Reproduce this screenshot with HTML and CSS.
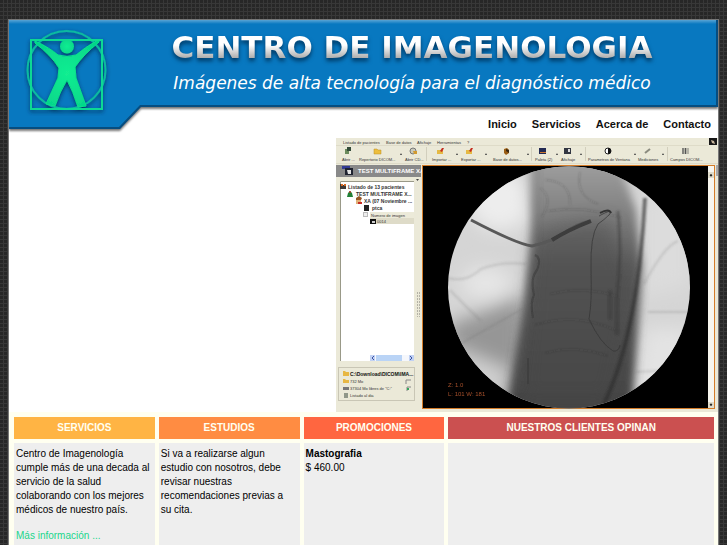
FILE: index.html
```html
<!DOCTYPE html>
<html lang="es">
<head>
<meta charset="utf-8">
<title>Centro de Imagenología</title>
<link rel="stylesheet" href="styles.css">
</head>
<body>
<div class="page">
  <header class="banner">
    <div class="banner-shape"><div class="banner-edge"></div><div class="banner-face"></div></div>
    <svg class="logo" viewBox="24 26 88 90" width="88" height="90" role="img" aria-label="Logotipo">
      <defs>
        <radialGradient id="body-green" cx="50%" cy="50%" r="60%"><stop offset="0" stop-color="#12ee91"/><stop offset="1" stop-color="#04d58a"/></radialGradient>
        <filter id="logo-shadow" x="-20%" y="-20%" width="150%" height="150%"><feDropShadow dx="0" dy="2" stdDeviation="2" flood-color="#002c50" flood-opacity=".85"/></filter>
      </defs>
      <g filter="url(#logo-shadow)">
        <circle cx="66.500" cy="70" r="39" fill="none" stroke="#09b9a0" stroke-width="2"/>
        <rect x="31" y="40" width="71" height="69" fill="none" stroke="#10d994" stroke-width="2"/>
        <circle cx="67" cy="46.500" r="7" fill="url(#body-green)"/>
        <path d="M35 41Q50 48 58 55Q67 58 76 55Q84 48 98 40L99 42Q83 55 75 67L76 78L86 106L78 107Q73 91 67 80Q60 91 55 106L46 104L58 78L59 68Q51 55 35 43Z" fill="url(#body-green)" stroke="#08e08a"/>
      </g>
    </svg>
    <div class="banner-main">
      <div class="banner-text">
        <h1>CENTRO DE IMAGENOLOGIA</h1>
        <p>Imágenes de alta tecnología para el diagnóstico médico</p>
      </div>
      <nav class="menu">
        <a href="#inicio">Inicio</a>
        <a href="#servicios">Servicios</a>
        <a href="#acerca">Acerca de</a>
        <a href="#contacto">Contacto</a>
      </nav>
    </div>
  </header>

  <div class="hero">
    <svg class="viewer" viewBox="336 138 382 274" width="382" height="274" role="img" aria-label="Visor de imágenes médicas">
      <defs>
        <clipPath id="scope"><circle cx="569" cy="287.500" r="121"/></clipPath>
        <filter id="b1" x="-50%" y="-50%" width="200%" height="200%"><feGaussianBlur stdDeviation="1"/></filter>
        <filter id="b0" x="-50%" y="-50%" width="200%" height="200%"><feGaussianBlur stdDeviation=".5"/></filter>
        <filter id="b3" x="-50%" y="-50%" width="200%" height="200%"><feGaussianBlur stdDeviation="4"/></filter>
        <filter id="b9" x="-50%" y="-50%" width="200%" height="200%"><feGaussianBlur stdDeviation="9"/></filter>
        <linearGradient id="spine" x1="0" y1="0" x2="0" y2="1"><stop offset="0" stop-color="#a0a0a0"/><stop offset=".2" stop-color="#828282"/><stop offset=".42" stop-color="#5b5b5b"/><stop offset="1" stop-color="#424242"/></linearGradient>
      </defs>
      <rect x="336" y="138" width="382" height="274" fill="#ebe9d8"/>
      <path d="M336 145.500H708M336 163.500H718" stroke="#dedbc8"/>
      <rect x="709" y="138" width="8" height="7" fill="#171717"/><path d="M711 140L714 141L715 144L712 143Z" fill="#c8b69d"/>

      <g class="tiny">
        <text x="343" y="144">Listado de pacientes</text><text x="386" y="144">Base de datos</text><text x="417" y="144">Afichaje</text><text x="437" y="144">Herramientas</text><text x="467" y="144">?</text>
        <text x="342" y="161">Abrir ...</text><text x="359" y="161">Repertorio DICOM...</text><text x="405" y="161">Abrir CD...</text><text x="432" y="161">Importar ...</text><text x="461" y="161">Exportar ...</text><text x="493" y="161">Base de datos...</text><text x="535" y="161">Paleta (2)</text><text x="561" y="161">Afichaje</text><text x="588" y="161">Parametros de Ventana</text><text x="638" y="161">Mediciones</text><text x="670" y="161">Campos DICOM...</text>
      </g>
      <path d="M400 154h2l-1 1zM456 154h2l-1 1zM485 154h2l-1 1zM527 154h2l-1 1zM556 154h2l-1 1zM580 154h2l-1 1zM634 154h2l-1 1zM662 154h2l-1 1z" fill="#444" stroke="#444" stroke-width=".5"/>
      <path d="M426.500 147v14M531.500 147v14M585.500 147v14M667.500 147v14" stroke="#d2cfbd"/>
      <g>
        <path d="M345 149h4v5h-4z" fill="#6b8a5c"/><path d="M347 147h4v4h-4z" fill="#334b39"/>
        <path d="M374 149h3l1 1h3v4h-7z" fill="#edbe3d" stroke="#b98d2b" stroke-width=".5"/>
        <circle cx="413" cy="151" r="3" fill="#cacaba" stroke="#777"/><path d="M413 151h4v3h-3z" fill="#d29a2f"/>
        <path d="M437 150h6v4h-6z" fill="#e5b944"/><path d="M440 151l2-3h2l-2 4z" fill="#c52f20"/>
        <path d="M466 150h6v4h-6z" fill="#e5b944"/><path d="M469 151l2-3h2l-2 4z" fill="#c52f20"/>
        <path d="M504 149l3-1 2 2v3l-3 2-2-2z" fill="#9a5d13"/><path d="M506 149l3 1v3l-3-2z" fill="#3c2810"/>
        <path d="M539 148h7v6h-7z" fill="#222a53"/><path d="M540 152h6v1h-6z" fill="#cb762d"/>
        <path d="M564 148h7v6h-7z" fill="#323642"/><path d="M568 149h2v3h-2z" fill="#dcdcdc"/>
        <circle cx="608" cy="151" r="3" fill="#fff" stroke="#222"/><path d="M608 148a3 3 0 0 1 0 6z" fill="#111"/>
        <path d="M645 153l5-4" stroke="#8b8b7f" stroke-width="2"/>
        <path d="M682 148h7v6h-7z" fill="#b5b4a8"/><path d="M683 148v6M685.500 148v6" stroke="#555"/>
      </g>

      <rect x="336" y="165" width="85" height="12" fill="#898989"/>
      <path d="M342 166h8v3h-8z" fill="#333b94"/><path d="M345 168h8v7h-8z" fill="#1f2330"/><path d="M347 170h4v4h-3z" fill="#e4e4e4"/>
      <text class="strip" x="358" y="173">TEST MULTIFRAME XA</text>
      <path d="M416 179h3l-1.500 2z" fill="#444"/>
      <rect x="340" y="181" width="74" height="180" fill="#fff"/><path d="M340.500 361V181.500H414" fill="none" stroke="#999988"/>
      <path d="M340 184h3v5h-3zM343 185h3v4h-3z" fill="#3d3a38"/><path d="M341 184h2v2h-2zM344 184h2v2h-2z" fill="#d96921"/>
      <path d="M350 191l2 2 1 4h-6l1-4z" fill="#228036"/><circle cx="350" cy="192" r="1" fill="#a83d2a"/>
      <path d="M356 198h5v6h-5z" fill="#e0b178"/><path d="M356 198l3-2 3 2-1 2h-5z" fill="#965625"/><path d="M358 202h4v2h-4z" fill="#c62b24"/>
      <rect x="364" y="205" width="5" height="6" fill="#222"/><rect x="363.500" y="212.500" width="4" height="4" fill="#eee" stroke="#bbb"/><path d="M370 212h44v6h-44z" fill="#ecead9"/><path d="M370 218h44v6h-44z" fill="#dedbc8"/><path d="M370 219h6v5h-6z" fill="#111"/><path d="M372 221h3v2h-3z" fill="#ccc"/>
      <g class="tree"><text x="348" y="189">Listado de 13 pacientes</text><text x="356" y="196">TEST MULTIFRAME X...</text><text x="364" y="203">XA (07 Noviembre ...</text><text x="372" y="210">ptca</text></g>
      <g class="tiny"><text x="371" y="217">Numero de imagen</text><text x="377" y="223">0014</text></g>
      <rect x="370" y="355" width="44" height="6" fill="#f5f7fc"/><rect x="376" y="355" width="26" height="6" fill="#bad4f6"/><path d="M370 355h5v6h-5zM409 355h5v6h-5z" fill="#c1d1f4"/><path d="M374 356l-2 2 2 2M410 356l2 2-2 2" fill="none" stroke="#3c55a4"/>
      <path d="M417.500 292v25M419.500 292v25" stroke="#b4b2a6" stroke-dasharray="2 1"/>
      <rect x="338.500" y="367.500" width="76" height="33" fill="none" stroke="#c9c6b5"/>
      <path d="M343 371h2l1 1h3v4h-6zM343 379h2l1 1h3v3h-6z" fill="#e7b743"/><path d="M343 387h6v3h-6z" fill="#777"/><path d="M344 393h4v5h-4z" fill="#909789"/><path d="M406 384v-4h5M407 391v-4h4" fill="none" stroke="#888"/><path d="M407 388h2v2h-2z" fill="#34a65c"/>
      <text class="path" x="350" y="376">C:\Download\DICOM\IMA...</text>
      <g class="tiny"><text x="350" y="383">732 Mo</text><text x="350" y="390">37304 Mo libres de "C:"</text><text x="350" y="397">Listado al dia</text></g>

      <rect x="422.500" y="165.500" width="292" height="243" fill="#000" stroke="#d47c29"/>
      <g clip-path="url(#scope)">
        <rect x="448" y="166" width="243" height="243" fill="#d5d5d5"/>
        <g filter="url(#b9)">
          <path d="M448 325L500 305L524 295V409H448Z" fill="#969696"/>
          <ellipse cx="486" cy="283" rx="25" ry="16" fill="#e6e6e6"/>
          <ellipse cx="500" cy="200" rx="32" ry="30" fill="#ededed"/>
          <path d="M448 345L510 370L500 410H448Z" fill="#d0d0d0"/>
          <path d="M640 190L691 200V285L640 300Z" fill="#dcdcdc"/>
          <path d="M645 328H691V405H630Z" fill="#e3e3e3"/>
          <path d="M530 160H618L630 210H530Z" fill="#aaa"/>
        </g>
        <path d="M534 160H615L636 210L642 265L632 415H506L525 300L531 245Z" fill="url(#spine)" filter="url(#b3)"/>
        <path d="M535 236Q565 219 610 220L633 290L610 400H520L530 295Z" fill="#494949" opacity=".45" filter="url(#b9)"/>
        <path d="M535 164V240L529 300L518 390" fill="none" stroke="#565656" stroke-width="4" opacity=".4" filter="url(#b3)"/>
        <g fill="none" filter="url(#b1)">
          <path d="M540 188Q554 197 542 217M545 180Q571 181 570 205M580 172Q575 196 598 204M548 211Q583 205 622 218M550 294Q584 285 620 297M535 325Q575 312 615 330M545 353Q575 344 608 356" stroke="#333" opacity=".25"/>
          <path d="M448 278Q466 283 481 269Q501 261 526 264M450 290Q467 308 481 321M462 343L522 309M648 312H689M636 372L674 370M644 284Q665 245 678 241" stroke="#666" stroke-width="2" opacity=".2"/>
          <path d="M618 211Q622 255 617 298V335M610 290V320" stroke="#2f2f2f" stroke-width="3" opacity=".4"/>
        </g>
        <path d="M645 198Q642 260 632 313T604 404" fill="none" stroke="#2c2c2c" stroke-width="4" opacity=".6" filter="url(#b1)"/>
        <g fill="none" filter="url(#b0)">
          <path d="M471 220Q492 231 508 238T532 246Q551 242 564 233T590 221" stroke="#585858" stroke-width="3"/>
          <path d="M552 240Q568 230 591 221" stroke="#3c3c3c" stroke-width="4"/>
          <path d="M599 216Q613 208 610 214Q604 220 598 224Q590 236 591 270T589 319Q600 343 613 351Q619 352 620 345" stroke="#343434" opacity=".7"/>
          <path d="M600 213Q609 208 611 213" stroke="#333" stroke-width="2"/>
          <path d="M535 255Q542 258 537 270Q530 278 534 295Q530 302 533 318M528 358V384" stroke="#303030" stroke-width="2" opacity=".45"/>
        </g>
      </g>
      <g class="readout"><text x="448" y="387">Z: 1.0</text><text x="448" y="396">L: 101 W: 181</text></g>
      <rect x="708" y="166" width="6" height="242" fill="#f7f6ef"/><path d="M708 172h6v6h-6zM708 402h6v6h-6z" fill="#dfdccb"/><path d="M710 176l1-2 1 2zM710 404l1 2 1-2z" fill="#111" stroke="#111" stroke-width=".5"/>
      <rect x="716" y="165" width="2" height="11" fill="#aaa"/>
    </svg>
  </div>

  <main class="columns">
    <section class="column services">
      <h2>SERVICIOS</h2>
      <div class="content">
        <p>Centro de Imagenología cumple más de una decada al servicio de la salud colaborando con los mejores médicos de nuestro país.</p>
        <p><a href="#mas">Más información ...</a></p>
      </div>
    </section>
    <section class="column studies">
      <h2>ESTUDIOS</h2>
      <div class="content"><p>Si va a realizarse algun estudio con nosotros, debe revisar nuestras recomendaciones previas a su cita.</p></div>
    </section>
    <section class="column offers">
      <h2>PROMOCIONES</h2>
      <div class="content"><p><strong>Mastografia</strong><br>$ 460.00</p></div>
    </section>
    <section class="column clients">
      <h2>NUESTROS CLIENTES OPINAN</h2>
      <div class="content"></div>
    </section>
  </main>
</div>
</body>
</html>
```
FILE: styles.css
```css
* { box-sizing: border-box; }

body {
  margin: 0;
  padding: 19px 8px 0;
  background-color: #272727;
  background-image:
    repeating-linear-gradient(90deg, transparent 0 3px, #383838 3px 4px),
    repeating-linear-gradient(0deg, transparent 0 3px, #383838 3px 4px);
  font-family: "Liberation Sans", Arial, sans-serif;
  font-size: 10px;
  line-height: 14px;
  color: #000;
}

h1, h2, p { margin: 0; }

.page {
  display: flex;
  flex-direction: column;
  min-height: calc(100vh - 19px);
  border: 1px solid #777;
  border-bottom: 0;
  background: #fff;
}

/* Banner */
.banner {
  position: relative;
  display: flex;
}

.banner-shape {
  position: absolute;
  inset: 0;
  filter: drop-shadow(0 2px 1px #777);
}

.banner-edge,
.banner-face {
  position: absolute;
  inset: 0;
}

.banner-edge {
  background: #064d80;
  clip-path: polygon(0 0, 100% 0, 100% 87px, 132px 87px, 111px 109px, 0 109px);
}

.banner-face {
  background: linear-gradient(#58a4d5 0, #0878c0 4px);
  clip-path: polygon(0 0, calc(100% - 2px) 0, calc(100% - 2px) 85px, 131px 85px, 110px 107px, 0 107px);
}

.logo {
  position: relative;
  flex: none;
  margin: 6px 0 0 15px;
}

.banner-main {
  position: relative;
  flex: 1;
}

.banner-text {
  height: 88px;
  padding-top: 8px;
  padding-right: 6px;
  text-align: center;
  white-space: nowrap;
}

.banner h1 {
  font-family: "DejaVu Sans", Verdana, sans-serif;
  font-size: 31px;
  font-weight: bold;
  line-height: 38px;
  color: transparent;
  background: linear-gradient(#fff 45%, #aaa 80%);
  background-clip: text;
  filter: drop-shadow(0 3px 2px #003862);
}

.banner p {
  font-family: "DejaVu Sans", Verdana, sans-serif;
  font-size: 17px;
  font-style: italic;
  line-height: 34px;
  color: #fff;
}

.menu {
  display: flex;
  justify-content: flex-end;
  gap: 15px;
  padding: 9px 7px 7px;
}

.menu a {
  font-size: 11px;
  font-weight: bold;
  color: #111;
  text-decoration: none;
}

/* Viewer picture */
.hero {
  display: flex;
  justify-content: flex-end;
}

.viewer {
  display: block;
  max-width: 100%;
}

.tiny { font-size: 4px; fill: #333; }
.strip { font-size: 6px; font-weight: bold; fill: #fff; }
.tree { font-size: 5px; font-weight: bold; fill: #333; }
.path { font-size: 5px; font-weight: bold; fill: #111; }
.readout { font-size: 6px; fill: #a6502b; }

/* Information columns */
.columns {
  flex: 1;
  display: grid;
  grid-template-columns: 141fr 141fr 141fr 266fr;
  gap: 4px;
  padding: 5px 4px 0 5px;
  background: #fffff0;
}

.column {
  display: flex;
  flex-direction: column;
  gap: 4px;
}

.column h2 {
  padding: 4px;
  font-size: 10px;
  line-height: 14px;
  text-align: center;
  color: #fffff0;
}

.services h2 { background: #ffb444; }
.studies h2 { background: #ff8c42; }
.offers h2 { background: #ff6640; }
.clients h2 { background: #cb5050; }

.content {
  flex: 1;
  padding: 4px 4px 4px 2px;
  background: #eee;
}

.content p + p { margin-top: 12px; }
.content a { color: #20d68c; text-decoration: none; }
```
